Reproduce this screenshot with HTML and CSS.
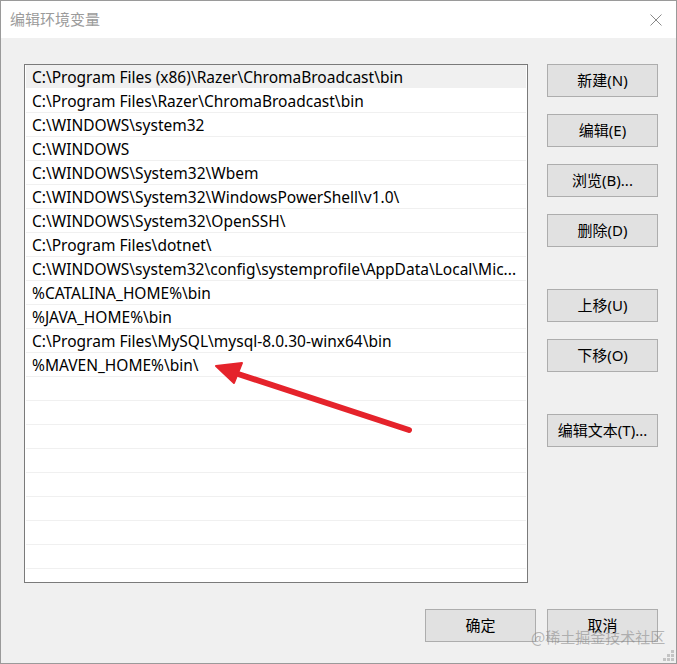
FILE: index.html
```html
<!DOCTYPE html>
<html lang="zh-CN">
<head>
<meta charset="utf-8">
<title>编辑环境变量</title>
<link rel="stylesheet" href="styles.css">
</head>
<body>
<div class="window">
  <div class="titlebar">
    <span class="title">编辑环境变量</span>
    <svg class="close" width="12" height="12" viewBox="0 0 12 12"><path d="M0.5 0.5 L11.5 11.5 M11.5 0.5 L0.5 11.5" stroke="#8a8a8a" stroke-width="1" fill="none"/></svg>
  </div>
  <div class="content">
    <div class="main">
      <div class="list">
        <div class="row selected">C:\Program Files (x86)\Razer\ChromaBroadcast\bin</div>
        <div class="row">C:\Program Files\Razer\ChromaBroadcast\bin</div>
        <div class="row">C:\WINDOWS\system32</div>
        <div class="row">C:\WINDOWS</div>
        <div class="row">C:\WINDOWS\System32\Wbem</div>
        <div class="row">C:\WINDOWS\System32\WindowsPowerShell\v1.0\</div>
        <div class="row">C:\WINDOWS\System32\OpenSSH\</div>
        <div class="row">C:\Program Files\dotnet\</div>
        <div class="row">C:\WINDOWS\system32\config\systemprofile\AppData\Local\Mic...</div>
        <div class="row">%CATALINA_HOME%\bin</div>
        <div class="row">%JAVA_HOME%\bin</div>
        <div class="row">C:\Program Files\MySQL\mysql-8.0.30-winx64\bin</div>
        <div class="row">%MAVEN_HOME%\bin\</div>
        <div class="row"></div>
        <div class="row"></div>
        <div class="row"></div>
        <div class="row"></div>
        <div class="row"></div>
        <div class="row"></div>
        <div class="row"></div>
        <div class="row"></div>
      </div>
      <div class="side">
        <button class="btn">新建(N)</button>
        <button class="btn">编辑(E)</button>
        <button class="btn">浏览(B)...</button>
        <button class="btn">删除(D)</button>
        <button class="btn group">上移(U)</button>
        <button class="btn">下移(O)</button>
        <button class="btn group">编辑文本(T)...</button>
      </div>
    </div>
    <div class="footer">
      <button class="btn">确定</button>
      <button class="btn">取消</button>
    </div>
  </div>
  <svg class="arrow" width="677" height="664" viewBox="0 0 677 664">
    <line x1="409" y1="430" x2="232" y2="372" stroke="#e5232b" stroke-width="6" stroke-linecap="round"/>
    <polygon points="216,366 242,363 234,383" fill="#e5232b" stroke="#e5232b" stroke-width="2" stroke-linejoin="round"/>
  </svg>
  <span class="watermark">@稀土掘金技术社区</span>
  <svg class="grip" width="12" height="12" viewBox="0 0 12 12">
    <rect x="8" y="0" width="3" height="3" fill="#c4c4c4"/>
    <rect x="4" y="4" width="3" height="3" fill="#c4c4c4"/>
    <rect x="8" y="4" width="3" height="3" fill="#c4c4c4"/>
    <rect x="0" y="8" width="3" height="3" fill="#c4c4c4"/>
    <rect x="4" y="8" width="3" height="3" fill="#c4c4c4"/>
    <rect x="8" y="8" width="3" height="3" fill="#c4c4c4"/>
  </svg>
</div>
</body>
</html>
```
FILE: styles.css
```css
* { box-sizing: border-box; }
html, body { margin: 0; padding: 0; background: #f0f0f0; }
body {
  font-family: "Segoe UI", "Noto Sans", "Noto Sans CJK SC", sans-serif;
  font-size: 15px;
  color: #000;
}
.window {
  position: relative;
  width: 677px;
  height: 664px;
  border: 1px solid #9a9a9a;
  background: #f0f0f0;
  display: flex;
  flex-direction: column;
  overflow: hidden;
}
.titlebar {
  height: 37px;
  background: #fff;
  display: flex;
  align-items: center;
  padding-left: 9px;
  padding-right: 14px;
  padding-bottom: 2px;
  flex: none;
}
.title {
  font-family: "Noto Sans CJK SC", sans-serif;
  font-size: 15px;
  color: #9b9b9b;
}
.close { margin-left: auto; margin-top: 2px; }
.content {
  flex: 1;
  padding: 26px 18px 0 23px;
}
.main {
  display: flex;
  gap: 19px;
}
.list {
  width: 504px;
  height: 519px;
  border: 1px solid #7a7a7a;
  background: #fff;
  padding: 0 1px;
  overflow: hidden;
}
.row {
  height: 24px;
  line-height: 23px;
  padding-top: 1px;
  border-bottom: 1px solid #f0f0f0;
  padding-left: 6px;
  font-size: 15.5px;
  white-space: nowrap;
  overflow: hidden;
}
.row.selected { background: #f0f0f0; border-bottom-color: #fff; }
.side {
  display: flex;
  flex-direction: column;
  gap: 17px;
}
.btn {
  width: 111px;
  height: 33px;
  background: #e1e1e1;
  border: 1px solid #adadad;
  font-family: "Segoe UI", "Noto Sans", "Noto Sans CJK SC", sans-serif;
  font-size: 15px;
  color: #000;
  padding: 0 0 3px 0;
  margin: 0;
}
.side .group { margin-top: 25px; }
.footer {
  display: flex;
  justify-content: flex-end;
  gap: 11px;
  margin-top: 26px;
}
.arrow {
  position: absolute;
  left: -1px;
  top: -1px;
  pointer-events: none;
}
.watermark {
  position: absolute;
  left: 530px;
  top: 625px;
  font-family: "Noto Sans CJK SC", sans-serif;
  font-size: 15px;
  color: rgba(130, 130, 130, 0.55);
  pointer-events: none;
}
.grip {
  position: absolute;
  right: 1px;
  bottom: 1px;
}
```
